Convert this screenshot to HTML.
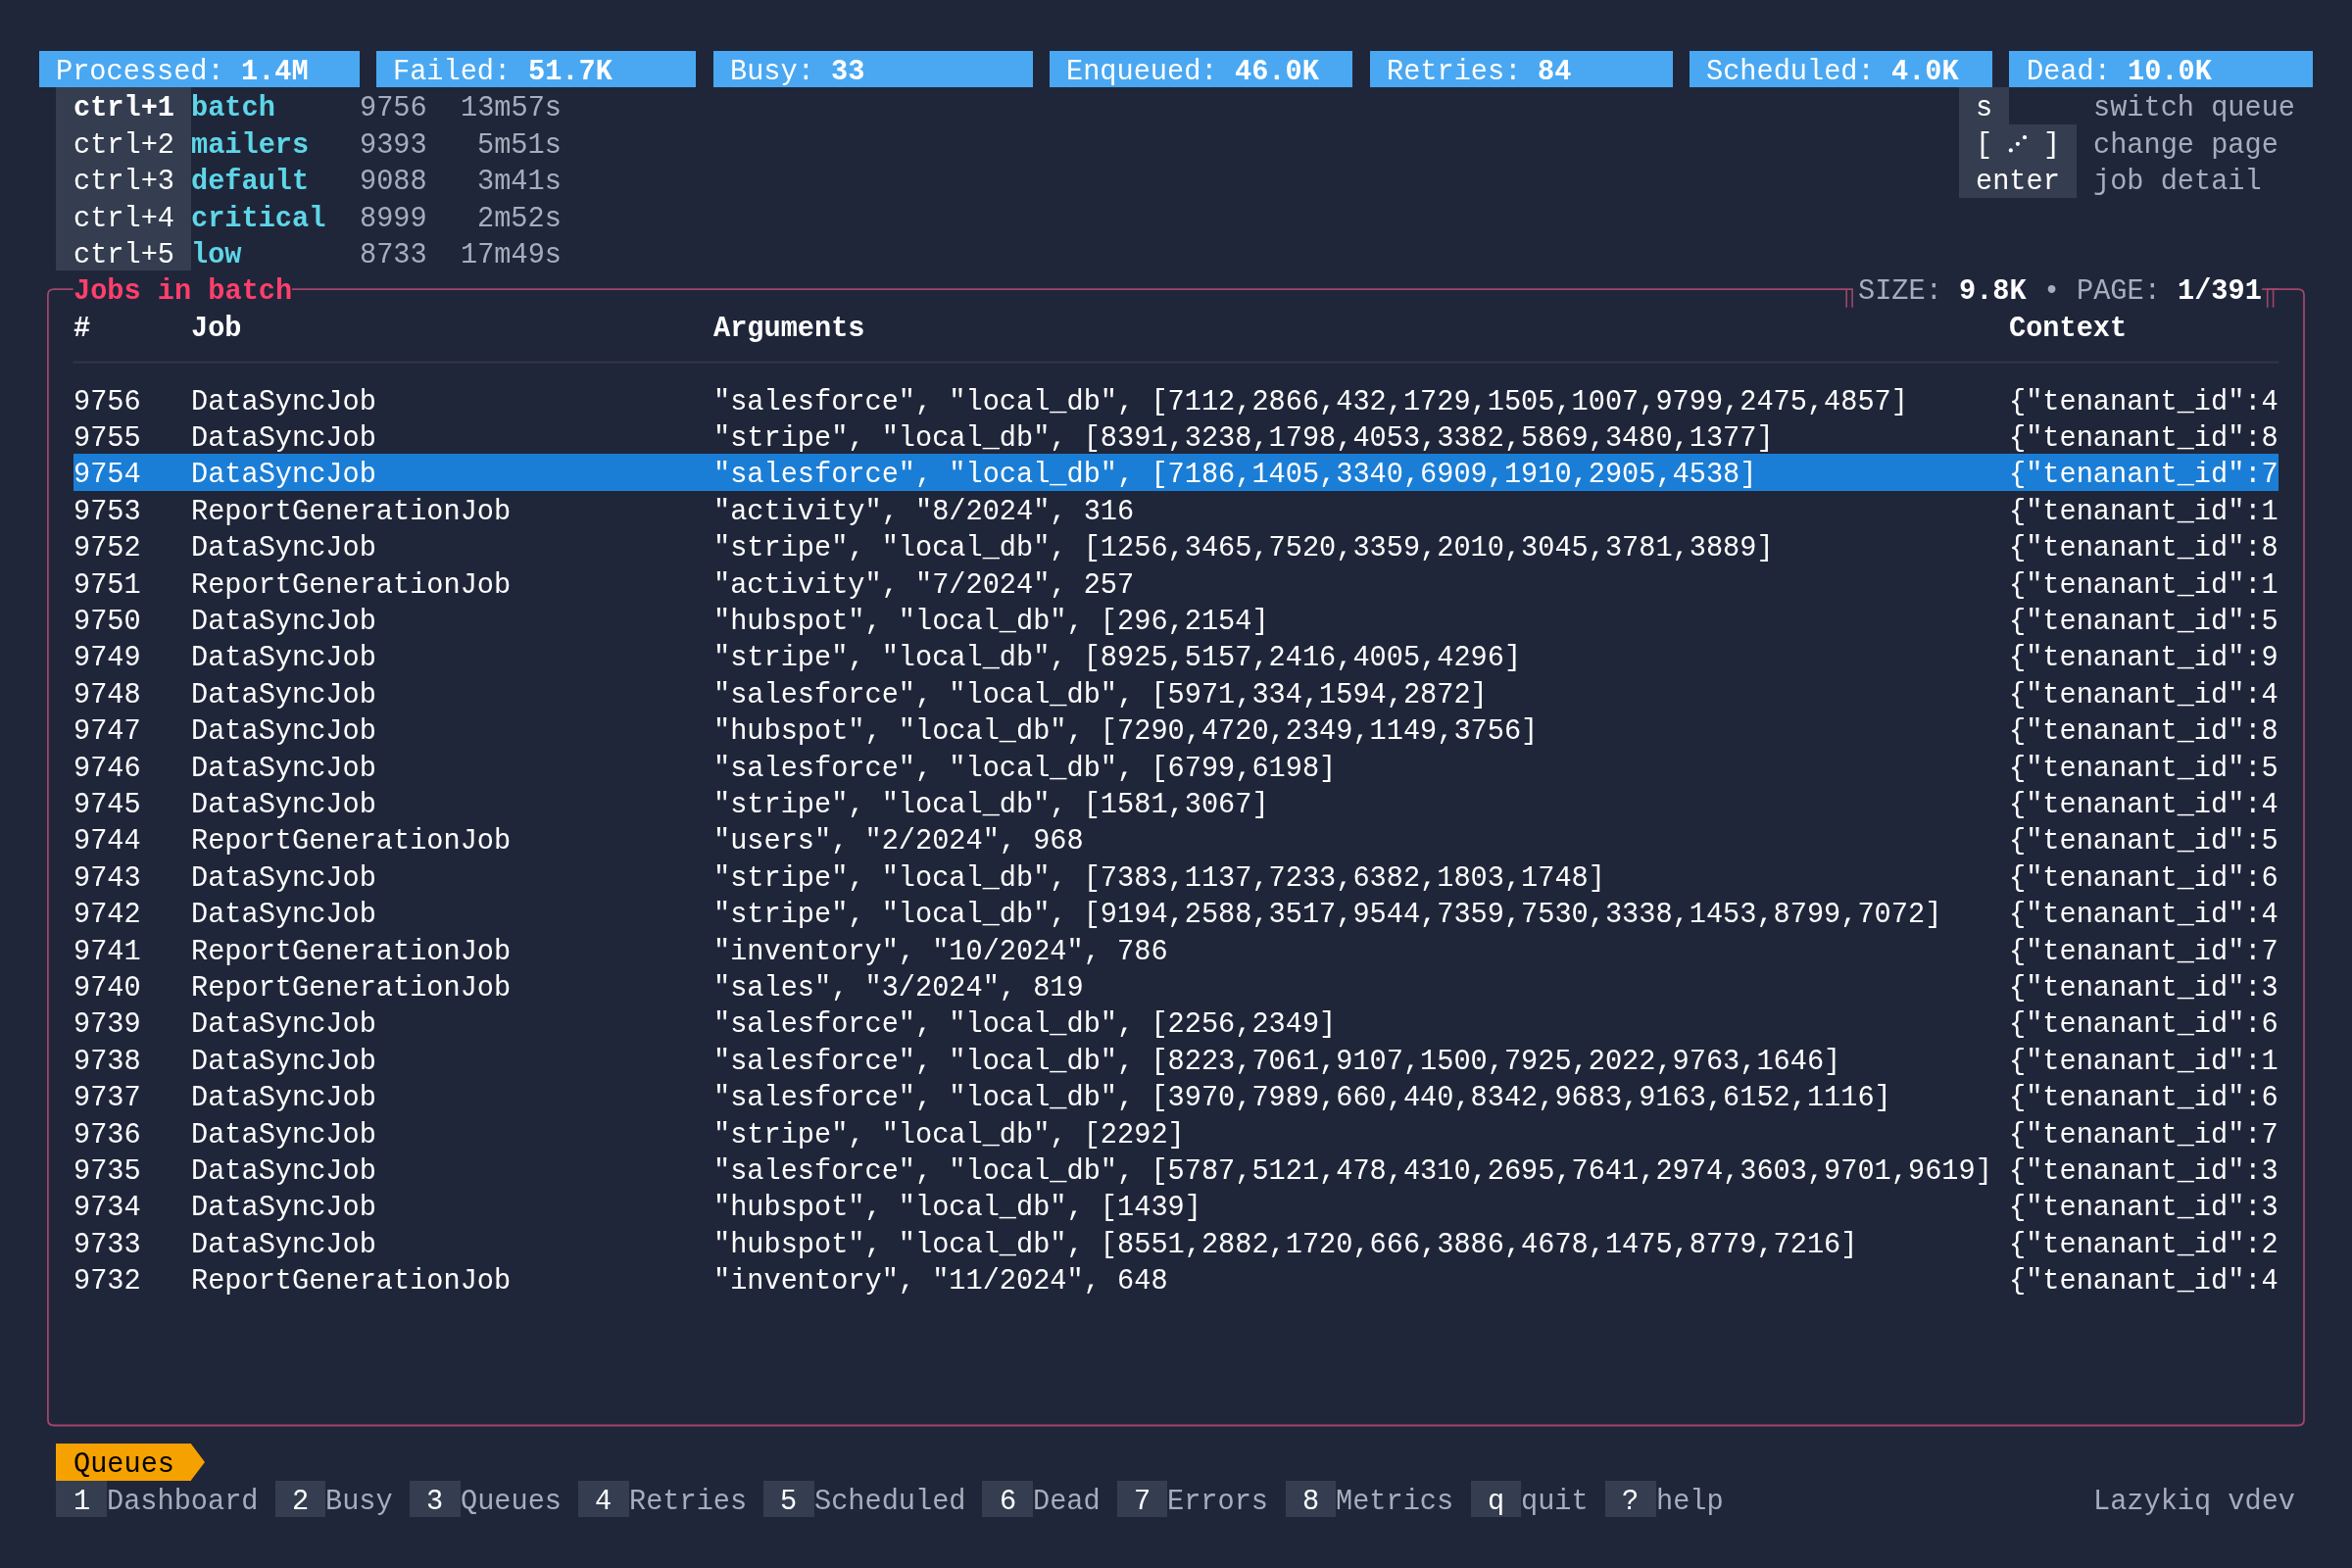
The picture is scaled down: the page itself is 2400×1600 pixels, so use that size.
<!DOCTYPE html>
<html><head><meta charset="utf-8"><title>Lazykiq</title>
<style>
html,body{margin:0;padding:0;}
body{width:2400px;height:1600px;background:#20263a;position:relative;overflow:hidden;font-family:"Liberation Mono",monospace;}
.b{position:absolute;}
.t{position:absolute;white-space:pre;font-size:28.629px;line-height:37.4px;height:37.4px;font-family:"Liberation Mono",monospace;transform:translateY(3.0px) scaleY(1.06);transform-origin:0 26px;will-change:transform;}
.bd{font-weight:bold;}
</style></head><body>

<div class="b" style="left:40.30px;top:52.00px;width:326.42px;height:37.40px;background:#4aa8f2"></div>
<div class="b" style="left:383.90px;top:52.00px;width:326.42px;height:37.40px;background:#4aa8f2"></div>
<div class="b" style="left:727.50px;top:52.00px;width:326.42px;height:37.40px;background:#4aa8f2"></div>
<div class="b" style="left:1071.10px;top:52.00px;width:309.24px;height:37.40px;background:#4aa8f2"></div>
<div class="b" style="left:1397.52px;top:52.00px;width:309.24px;height:37.40px;background:#4aa8f2"></div>
<div class="b" style="left:1723.94px;top:52.00px;width:309.24px;height:37.40px;background:#4aa8f2"></div>
<div class="b" style="left:2050.36px;top:52.00px;width:309.24px;height:37.40px;background:#4aa8f2"></div>
<div class="b" style="left:57.48px;top:89.40px;width:137.44px;height:187.00px;background:#353e50"></div>
<div class="b" style="left:1998.82px;top:89.40px;width:51.54px;height:37.40px;background:#353e50"></div>
<div class="b" style="left:1998.82px;top:126.80px;width:120.26px;height:74.80px;background:#353e50"></div>
<div class="b" style="left:74.66px;top:463.40px;width:2250.58px;height:37.40px;background:#1b7ed6"></div>
<div class="b" style="left:57.48px;top:1473.20px;width:137.44px;height:37.40px;background:#f5a100"></div>
<div class="b" style="left:57.48px;top:1510.60px;width:51.54px;height:37.40px;background:#353e50"></div>
<div class="b" style="left:280.82px;top:1510.60px;width:51.54px;height:37.40px;background:#353e50"></div>
<div class="b" style="left:418.26px;top:1510.60px;width:51.54px;height:37.40px;background:#353e50"></div>
<div class="b" style="left:590.06px;top:1510.60px;width:51.54px;height:37.40px;background:#353e50"></div>
<div class="b" style="left:779.04px;top:1510.60px;width:51.54px;height:37.40px;background:#353e50"></div>
<div class="b" style="left:1002.38px;top:1510.60px;width:51.54px;height:37.40px;background:#353e50"></div>
<div class="b" style="left:1139.82px;top:1510.60px;width:51.54px;height:37.40px;background:#353e50"></div>
<div class="b" style="left:1311.62px;top:1510.60px;width:51.54px;height:37.40px;background:#353e50"></div>
<div class="b" style="left:1500.60px;top:1510.60px;width:51.54px;height:37.40px;background:#353e50"></div>
<div class="b" style="left:1638.04px;top:1510.60px;width:51.54px;height:37.40px;background:#353e50"></div>
<svg class="b" style="left:0;top:0" width="2400" height="1600" viewBox="0 0 2400 1600"><path d="M 74.66 295.10 L 54.89 295.10 Q 48.89 295.10 48.89 301.10 L 48.89 1448.50 Q 48.89 1454.50 54.89 1454.50 L 2345.01 1454.50 Q 2351.01 1454.50 2351.01 1448.50 L 2351.01 301.10 Q 2351.01 295.10 2345.01 295.10 L 2308.06 295.10" fill="none" stroke="#a0466a" stroke-width="1.8"/><line x1="1884.20" y1="295.10" x2="1884.20" y2="313.80" stroke="#a0466a" stroke-width="1.6"/><line x1="1890.10" y1="295.10" x2="1890.10" y2="313.80" stroke="#a0466a" stroke-width="1.6"/><line x1="2313.70" y1="295.10" x2="2313.70" y2="313.80" stroke="#a0466a" stroke-width="1.6"/><line x1="2319.60" y1="295.10" x2="2319.60" y2="313.80" stroke="#a0466a" stroke-width="1.6"/><line x1="298.00" y1="295.10" x2="1890.90" y2="295.10" stroke="#a0466a" stroke-width="1.8"/><line x1="2312.90" y1="295.10" x2="2325.24" y2="295.10" stroke="#a0466a" stroke-width="1.8"/><circle cx="2051.8" cy="153.4" r="2.1" fill="#ffffff"/><circle cx="2058.9" cy="146.8" r="2.1" fill="#ffffff"/><circle cx="2066.0" cy="140.2" r="2.1" fill="#ffffff"/><line x1="74.66" y1="369.60" x2="2325.24" y2="369.60" stroke="#34374c" stroke-width="1.8"/><path d="M 194.92 1473.20 L 209.01 1491.90 L 194.92 1510.60 Z" fill="#f5a100"/></svg>
<span class="t" style="left:57.48px;top:52.00px;color:#ffffff">Processed: </span>
<span class="t bd" style="left:246.46px;top:52.00px;color:#ffffff">1.4M</span>
<span class="t" style="left:401.08px;top:52.00px;color:#ffffff">Failed: </span>
<span class="t bd" style="left:538.52px;top:52.00px;color:#ffffff">51.7K</span>
<span class="t" style="left:744.68px;top:52.00px;color:#ffffff">Busy: </span>
<span class="t bd" style="left:847.76px;top:52.00px;color:#ffffff">33</span>
<span class="t" style="left:1088.28px;top:52.00px;color:#ffffff">Enqueued: </span>
<span class="t bd" style="left:1260.08px;top:52.00px;color:#ffffff">46.0K</span>
<span class="t" style="left:1414.70px;top:52.00px;color:#ffffff">Retries: </span>
<span class="t bd" style="left:1569.32px;top:52.00px;color:#ffffff">84</span>
<span class="t" style="left:1741.12px;top:52.00px;color:#ffffff">Scheduled: </span>
<span class="t bd" style="left:1930.10px;top:52.00px;color:#ffffff">4.0K</span>
<span class="t" style="left:2067.54px;top:52.00px;color:#ffffff">Dead: </span>
<span class="t bd" style="left:2170.62px;top:52.00px;color:#ffffff">10.0K</span>
<span class="t bd" style="left:74.66px;top:89.40px;color:#ffffff">ctrl+1</span>
<span class="t bd" style="left:194.92px;top:89.40px;color:#5ed6e8">batch</span>
<span class="t" style="left:366.72px;top:89.40px;color:#a6adbb">9756</span>
<span class="t" style="left:469.80px;top:89.40px;color:#a6adbb">13m57s</span>
<span class="t" style="left:74.66px;top:126.80px;color:#ffffff">ctrl+2</span>
<span class="t bd" style="left:194.92px;top:126.80px;color:#5ed6e8">mailers</span>
<span class="t" style="left:366.72px;top:126.80px;color:#a6adbb">9393</span>
<span class="t" style="left:486.98px;top:126.80px;color:#a6adbb">5m51s</span>
<span class="t" style="left:74.66px;top:164.20px;color:#ffffff">ctrl+3</span>
<span class="t bd" style="left:194.92px;top:164.20px;color:#5ed6e8">default</span>
<span class="t" style="left:366.72px;top:164.20px;color:#a6adbb">9088</span>
<span class="t" style="left:486.98px;top:164.20px;color:#a6adbb">3m41s</span>
<span class="t" style="left:74.66px;top:201.60px;color:#ffffff">ctrl+4</span>
<span class="t bd" style="left:194.92px;top:201.60px;color:#5ed6e8">critical</span>
<span class="t" style="left:366.72px;top:201.60px;color:#a6adbb">8999</span>
<span class="t" style="left:486.98px;top:201.60px;color:#a6adbb">2m52s</span>
<span class="t" style="left:74.66px;top:239.00px;color:#ffffff">ctrl+5</span>
<span class="t bd" style="left:194.92px;top:239.00px;color:#5ed6e8">low</span>
<span class="t" style="left:366.72px;top:239.00px;color:#a6adbb">8733</span>
<span class="t" style="left:469.80px;top:239.00px;color:#a6adbb">17m49s</span>
<span class="t" style="left:2016.00px;top:89.40px;color:#ffffff">s</span>
<span class="t" style="left:2016.00px;top:126.80px;color:#ffffff">[</span>
<span class="t" style="left:2084.72px;top:126.80px;color:#ffffff">]</span>
<span class="t" style="left:2016.00px;top:164.20px;color:#ffffff">enter</span>
<span class="t" style="left:2136.26px;top:89.40px;color:#a6adbb">switch queue</span>
<span class="t" style="left:2136.26px;top:126.80px;color:#a6adbb">change page</span>
<span class="t" style="left:2136.26px;top:164.20px;color:#a6adbb">job detail</span>
<span class="t bd" style="left:74.66px;top:276.40px;color:#ff3f6c">Jobs in batch</span>
<span class="t" style="left:1895.74px;top:276.40px;color:#a6adbb">SIZE: </span>
<span class="t bd" style="left:1998.82px;top:276.40px;color:#ffffff">9.8K</span>
<span class="t" style="left:2084.72px;top:276.40px;color:#a6adbb">•</span>
<span class="t" style="left:2119.08px;top:276.40px;color:#a6adbb">PAGE: </span>
<span class="t bd" style="left:2222.16px;top:276.40px;color:#ffffff">1/391</span>
<span class="t bd" style="left:74.66px;top:313.80px;color:#ffffff">#</span>
<span class="t bd" style="left:194.92px;top:313.80px;color:#ffffff">Job</span>
<span class="t bd" style="left:727.50px;top:313.80px;color:#ffffff">Arguments</span>
<span class="t bd" style="left:2050.36px;top:313.80px;color:#ffffff">Context</span>
<span class="t" style="left:74.66px;top:388.60px;color:#ffffff">9756</span>
<span class="t" style="left:194.92px;top:388.60px;color:#ffffff">DataSyncJob</span>
<span class="t" style="left:727.50px;top:388.60px;color:#ffffff">&quot;salesforce&quot;, &quot;local_db&quot;, [7112,2866,432,1729,1505,1007,9799,2475,4857]</span>
<span class="t" style="left:2050.36px;top:388.60px;color:#ffffff">{&quot;tenanant_id&quot;:4</span>
<span class="t" style="left:74.66px;top:426.00px;color:#ffffff">9755</span>
<span class="t" style="left:194.92px;top:426.00px;color:#ffffff">DataSyncJob</span>
<span class="t" style="left:727.50px;top:426.00px;color:#ffffff">&quot;stripe&quot;, &quot;local_db&quot;, [8391,3238,1798,4053,3382,5869,3480,1377]</span>
<span class="t" style="left:2050.36px;top:426.00px;color:#ffffff">{&quot;tenanant_id&quot;:8</span>
<span class="t" style="left:74.66px;top:463.40px;color:#ffffff">9754</span>
<span class="t" style="left:194.92px;top:463.40px;color:#ffffff">DataSyncJob</span>
<span class="t" style="left:727.50px;top:463.40px;color:#ffffff">&quot;salesforce&quot;, &quot;local_db&quot;, [7186,1405,3340,6909,1910,2905,4538]</span>
<span class="t" style="left:2050.36px;top:463.40px;color:#ffffff">{&quot;tenanant_id&quot;:7</span>
<span class="t" style="left:74.66px;top:500.80px;color:#ffffff">9753</span>
<span class="t" style="left:194.92px;top:500.80px;color:#ffffff">ReportGenerationJob</span>
<span class="t" style="left:727.50px;top:500.80px;color:#ffffff">&quot;activity&quot;, &quot;8/2024&quot;, 316</span>
<span class="t" style="left:2050.36px;top:500.80px;color:#ffffff">{&quot;tenanant_id&quot;:1</span>
<span class="t" style="left:74.66px;top:538.20px;color:#ffffff">9752</span>
<span class="t" style="left:194.92px;top:538.20px;color:#ffffff">DataSyncJob</span>
<span class="t" style="left:727.50px;top:538.20px;color:#ffffff">&quot;stripe&quot;, &quot;local_db&quot;, [1256,3465,7520,3359,2010,3045,3781,3889]</span>
<span class="t" style="left:2050.36px;top:538.20px;color:#ffffff">{&quot;tenanant_id&quot;:8</span>
<span class="t" style="left:74.66px;top:575.60px;color:#ffffff">9751</span>
<span class="t" style="left:194.92px;top:575.60px;color:#ffffff">ReportGenerationJob</span>
<span class="t" style="left:727.50px;top:575.60px;color:#ffffff">&quot;activity&quot;, &quot;7/2024&quot;, 257</span>
<span class="t" style="left:2050.36px;top:575.60px;color:#ffffff">{&quot;tenanant_id&quot;:1</span>
<span class="t" style="left:74.66px;top:613.00px;color:#ffffff">9750</span>
<span class="t" style="left:194.92px;top:613.00px;color:#ffffff">DataSyncJob</span>
<span class="t" style="left:727.50px;top:613.00px;color:#ffffff">&quot;hubspot&quot;, &quot;local_db&quot;, [296,2154]</span>
<span class="t" style="left:2050.36px;top:613.00px;color:#ffffff">{&quot;tenanant_id&quot;:5</span>
<span class="t" style="left:74.66px;top:650.40px;color:#ffffff">9749</span>
<span class="t" style="left:194.92px;top:650.40px;color:#ffffff">DataSyncJob</span>
<span class="t" style="left:727.50px;top:650.40px;color:#ffffff">&quot;stripe&quot;, &quot;local_db&quot;, [8925,5157,2416,4005,4296]</span>
<span class="t" style="left:2050.36px;top:650.40px;color:#ffffff">{&quot;tenanant_id&quot;:9</span>
<span class="t" style="left:74.66px;top:687.80px;color:#ffffff">9748</span>
<span class="t" style="left:194.92px;top:687.80px;color:#ffffff">DataSyncJob</span>
<span class="t" style="left:727.50px;top:687.80px;color:#ffffff">&quot;salesforce&quot;, &quot;local_db&quot;, [5971,334,1594,2872]</span>
<span class="t" style="left:2050.36px;top:687.80px;color:#ffffff">{&quot;tenanant_id&quot;:4</span>
<span class="t" style="left:74.66px;top:725.20px;color:#ffffff">9747</span>
<span class="t" style="left:194.92px;top:725.20px;color:#ffffff">DataSyncJob</span>
<span class="t" style="left:727.50px;top:725.20px;color:#ffffff">&quot;hubspot&quot;, &quot;local_db&quot;, [7290,4720,2349,1149,3756]</span>
<span class="t" style="left:2050.36px;top:725.20px;color:#ffffff">{&quot;tenanant_id&quot;:8</span>
<span class="t" style="left:74.66px;top:762.60px;color:#ffffff">9746</span>
<span class="t" style="left:194.92px;top:762.60px;color:#ffffff">DataSyncJob</span>
<span class="t" style="left:727.50px;top:762.60px;color:#ffffff">&quot;salesforce&quot;, &quot;local_db&quot;, [6799,6198]</span>
<span class="t" style="left:2050.36px;top:762.60px;color:#ffffff">{&quot;tenanant_id&quot;:5</span>
<span class="t" style="left:74.66px;top:800.00px;color:#ffffff">9745</span>
<span class="t" style="left:194.92px;top:800.00px;color:#ffffff">DataSyncJob</span>
<span class="t" style="left:727.50px;top:800.00px;color:#ffffff">&quot;stripe&quot;, &quot;local_db&quot;, [1581,3067]</span>
<span class="t" style="left:2050.36px;top:800.00px;color:#ffffff">{&quot;tenanant_id&quot;:4</span>
<span class="t" style="left:74.66px;top:837.40px;color:#ffffff">9744</span>
<span class="t" style="left:194.92px;top:837.40px;color:#ffffff">ReportGenerationJob</span>
<span class="t" style="left:727.50px;top:837.40px;color:#ffffff">&quot;users&quot;, &quot;2/2024&quot;, 968</span>
<span class="t" style="left:2050.36px;top:837.40px;color:#ffffff">{&quot;tenanant_id&quot;:5</span>
<span class="t" style="left:74.66px;top:874.80px;color:#ffffff">9743</span>
<span class="t" style="left:194.92px;top:874.80px;color:#ffffff">DataSyncJob</span>
<span class="t" style="left:727.50px;top:874.80px;color:#ffffff">&quot;stripe&quot;, &quot;local_db&quot;, [7383,1137,7233,6382,1803,1748]</span>
<span class="t" style="left:2050.36px;top:874.80px;color:#ffffff">{&quot;tenanant_id&quot;:6</span>
<span class="t" style="left:74.66px;top:912.20px;color:#ffffff">9742</span>
<span class="t" style="left:194.92px;top:912.20px;color:#ffffff">DataSyncJob</span>
<span class="t" style="left:727.50px;top:912.20px;color:#ffffff">&quot;stripe&quot;, &quot;local_db&quot;, [9194,2588,3517,9544,7359,7530,3338,1453,8799,7072]</span>
<span class="t" style="left:2050.36px;top:912.20px;color:#ffffff">{&quot;tenanant_id&quot;:4</span>
<span class="t" style="left:74.66px;top:949.60px;color:#ffffff">9741</span>
<span class="t" style="left:194.92px;top:949.60px;color:#ffffff">ReportGenerationJob</span>
<span class="t" style="left:727.50px;top:949.60px;color:#ffffff">&quot;inventory&quot;, &quot;10/2024&quot;, 786</span>
<span class="t" style="left:2050.36px;top:949.60px;color:#ffffff">{&quot;tenanant_id&quot;:7</span>
<span class="t" style="left:74.66px;top:987.00px;color:#ffffff">9740</span>
<span class="t" style="left:194.92px;top:987.00px;color:#ffffff">ReportGenerationJob</span>
<span class="t" style="left:727.50px;top:987.00px;color:#ffffff">&quot;sales&quot;, &quot;3/2024&quot;, 819</span>
<span class="t" style="left:2050.36px;top:987.00px;color:#ffffff">{&quot;tenanant_id&quot;:3</span>
<span class="t" style="left:74.66px;top:1024.40px;color:#ffffff">9739</span>
<span class="t" style="left:194.92px;top:1024.40px;color:#ffffff">DataSyncJob</span>
<span class="t" style="left:727.50px;top:1024.40px;color:#ffffff">&quot;salesforce&quot;, &quot;local_db&quot;, [2256,2349]</span>
<span class="t" style="left:2050.36px;top:1024.40px;color:#ffffff">{&quot;tenanant_id&quot;:6</span>
<span class="t" style="left:74.66px;top:1061.80px;color:#ffffff">9738</span>
<span class="t" style="left:194.92px;top:1061.80px;color:#ffffff">DataSyncJob</span>
<span class="t" style="left:727.50px;top:1061.80px;color:#ffffff">&quot;salesforce&quot;, &quot;local_db&quot;, [8223,7061,9107,1500,7925,2022,9763,1646]</span>
<span class="t" style="left:2050.36px;top:1061.80px;color:#ffffff">{&quot;tenanant_id&quot;:1</span>
<span class="t" style="left:74.66px;top:1099.20px;color:#ffffff">9737</span>
<span class="t" style="left:194.92px;top:1099.20px;color:#ffffff">DataSyncJob</span>
<span class="t" style="left:727.50px;top:1099.20px;color:#ffffff">&quot;salesforce&quot;, &quot;local_db&quot;, [3970,7989,660,440,8342,9683,9163,6152,1116]</span>
<span class="t" style="left:2050.36px;top:1099.20px;color:#ffffff">{&quot;tenanant_id&quot;:6</span>
<span class="t" style="left:74.66px;top:1136.60px;color:#ffffff">9736</span>
<span class="t" style="left:194.92px;top:1136.60px;color:#ffffff">DataSyncJob</span>
<span class="t" style="left:727.50px;top:1136.60px;color:#ffffff">&quot;stripe&quot;, &quot;local_db&quot;, [2292]</span>
<span class="t" style="left:2050.36px;top:1136.60px;color:#ffffff">{&quot;tenanant_id&quot;:7</span>
<span class="t" style="left:74.66px;top:1174.00px;color:#ffffff">9735</span>
<span class="t" style="left:194.92px;top:1174.00px;color:#ffffff">DataSyncJob</span>
<span class="t" style="left:727.50px;top:1174.00px;color:#ffffff">&quot;salesforce&quot;, &quot;local_db&quot;, [5787,5121,478,4310,2695,7641,2974,3603,9701,9619]</span>
<span class="t" style="left:2050.36px;top:1174.00px;color:#ffffff">{&quot;tenanant_id&quot;:3</span>
<span class="t" style="left:74.66px;top:1211.40px;color:#ffffff">9734</span>
<span class="t" style="left:194.92px;top:1211.40px;color:#ffffff">DataSyncJob</span>
<span class="t" style="left:727.50px;top:1211.40px;color:#ffffff">&quot;hubspot&quot;, &quot;local_db&quot;, [1439]</span>
<span class="t" style="left:2050.36px;top:1211.40px;color:#ffffff">{&quot;tenanant_id&quot;:3</span>
<span class="t" style="left:74.66px;top:1248.80px;color:#ffffff">9733</span>
<span class="t" style="left:194.92px;top:1248.80px;color:#ffffff">DataSyncJob</span>
<span class="t" style="left:727.50px;top:1248.80px;color:#ffffff">&quot;hubspot&quot;, &quot;local_db&quot;, [8551,2882,1720,666,3886,4678,1475,8779,7216]</span>
<span class="t" style="left:2050.36px;top:1248.80px;color:#ffffff">{&quot;tenanant_id&quot;:2</span>
<span class="t" style="left:74.66px;top:1286.20px;color:#ffffff">9732</span>
<span class="t" style="left:194.92px;top:1286.20px;color:#ffffff">ReportGenerationJob</span>
<span class="t" style="left:727.50px;top:1286.20px;color:#ffffff">&quot;inventory&quot;, &quot;11/2024&quot;, 648</span>
<span class="t" style="left:2050.36px;top:1286.20px;color:#ffffff">{&quot;tenanant_id&quot;:4</span>
<span class="t" style="left:74.66px;top:1473.20px;color:#000000">Queues</span>
<span class="t" style="left:74.66px;top:1510.60px;color:#ffffff">1</span>
<span class="t" style="left:109.02px;top:1510.60px;color:#a6adbb">Dashboard</span>
<span class="t" style="left:298.00px;top:1510.60px;color:#ffffff">2</span>
<span class="t" style="left:332.36px;top:1510.60px;color:#a6adbb">Busy</span>
<span class="t" style="left:435.44px;top:1510.60px;color:#ffffff">3</span>
<span class="t" style="left:469.80px;top:1510.60px;color:#a6adbb">Queues</span>
<span class="t" style="left:607.24px;top:1510.60px;color:#ffffff">4</span>
<span class="t" style="left:641.60px;top:1510.60px;color:#a6adbb">Retries</span>
<span class="t" style="left:796.22px;top:1510.60px;color:#ffffff">5</span>
<span class="t" style="left:830.58px;top:1510.60px;color:#a6adbb">Scheduled</span>
<span class="t" style="left:1019.56px;top:1510.60px;color:#ffffff">6</span>
<span class="t" style="left:1053.92px;top:1510.60px;color:#a6adbb">Dead</span>
<span class="t" style="left:1157.00px;top:1510.60px;color:#ffffff">7</span>
<span class="t" style="left:1191.36px;top:1510.60px;color:#a6adbb">Errors</span>
<span class="t" style="left:1328.80px;top:1510.60px;color:#ffffff">8</span>
<span class="t" style="left:1363.16px;top:1510.60px;color:#a6adbb">Metrics</span>
<span class="t" style="left:1517.78px;top:1510.60px;color:#ffffff">q</span>
<span class="t" style="left:1552.14px;top:1510.60px;color:#a6adbb">quit</span>
<span class="t" style="left:1655.22px;top:1510.60px;color:#ffffff">?</span>
<span class="t" style="left:1689.58px;top:1510.60px;color:#a6adbb">help</span>
<span class="t" style="left:2136.26px;top:1510.60px;color:#a6adbb">Lazykiq vdev</span>
</body></html>
